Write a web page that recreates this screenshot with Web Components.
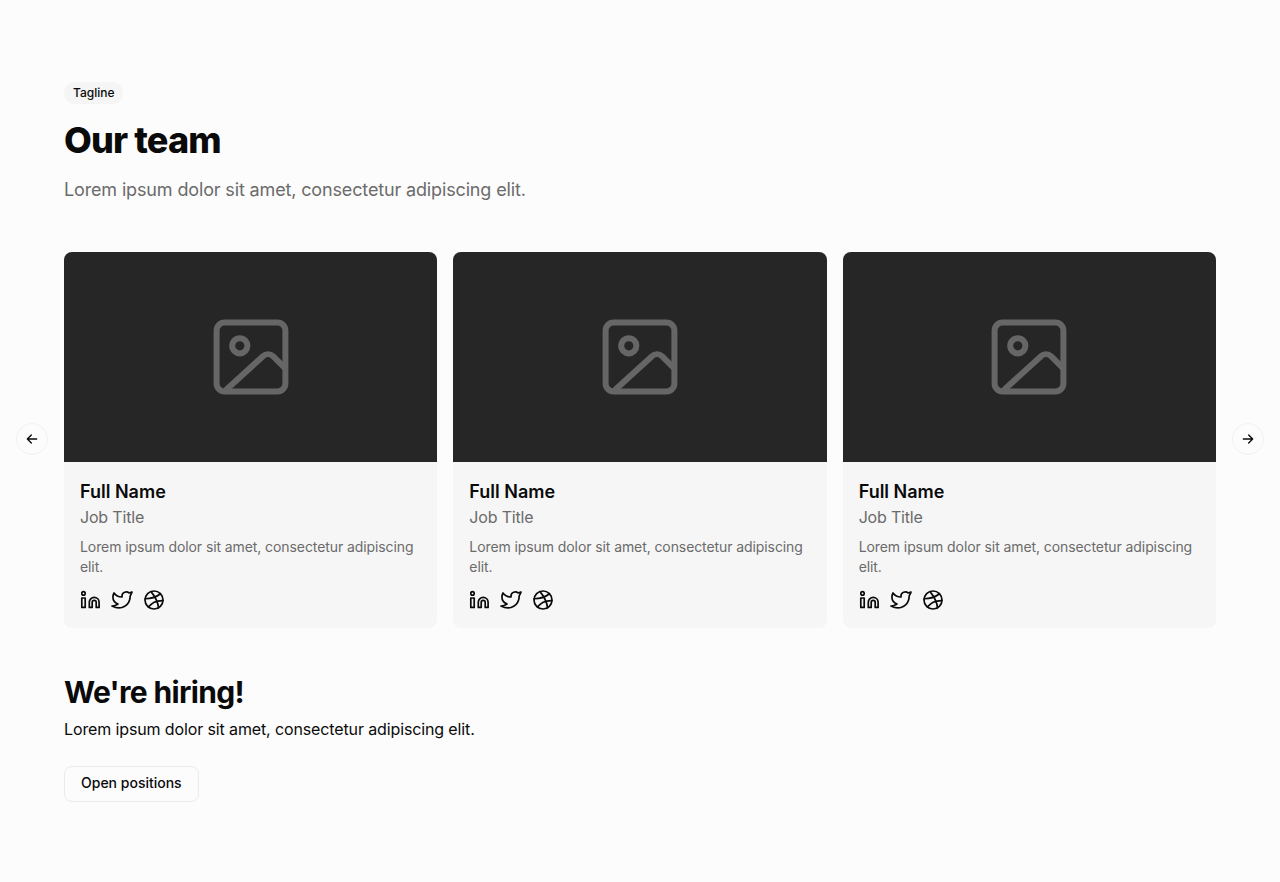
<!doctype html>
<html><head><meta charset="utf-8"><title>Our team</title>
<style>
html,body{margin:0;padding:0;background:#fcfcfc;}
body{font-family:Inter,"Noto Sans",sans-serif;color:#0a0a0a;}
</style></head>
<body>
<team-page></team-page>
<script>
const I={
 linkedin:'<circle cx="5.5" cy="5.4" r="1.7"/><path d="M3.8 10h3.4v9.4h-3.4z"/><path d="M11.3 19.4v-5.1a4.9 4.9 0 0 1 9.8 0v5.1h-2.9v-5.1a2 2 0 0 0-4 0v5.1z"/>',
 twitter:'<path d="M22 4.01c-1 .49-1.98.689-3 .99c-1.121-1.265-2.783-1.335-4.38-.737s-2.643 1.76-2.62 3.737v1c-3.245.083-6.135-1.395-8-4c0 0-4.182 7.433 4 11c-1.872 1.247-3.739 2.088-6 2c3.308 1.803 6.913 2.423 10.034 1.517c3.58-1.04 6.522-3.723 7.651-7.742a13.84 13.84 0 0 0 .497-3.753c0-.249 1.51-2.772 1.818-4.013z"/>',
 dribbble:'<circle cx="12" cy="12" r="9"/><path d="M9 3.6c5 6 7 10.5 7.5 16.2"/><path d="M6.4 19c3.5-3.5 6-6.5 14.5-6.4"/><path d="M3.1 10.75c5 0 9.814-.38 15.314-5"/>'
};
class SocialIcon extends HTMLElement{connectedCallback(){
 this.attachShadow({mode:'open'}).innerHTML=`<style>:host{display:block;width:24px;height:24px}svg{display:block}</style><svg viewBox="0 0 24 24" width="24" height="24" fill="none" stroke="#0a0a0a" stroke-width="1.7" stroke-linecap="round" stroke-linejoin="round">${I[this.getAttribute('name')]}</svg>`;
}}
customElements.define('social-icon',SocialIcon);

class TeamCard extends HTMLElement{connectedCallback(){
 this.attachShadow({mode:'open'}).innerHTML=`<style>
 :host{display:flex;flex-direction:column;background:#f6f6f6;border-radius:8px;overflow:hidden;min-width:0}
 .img{height:210px;background:#262626;display:flex;align-items:center;justify-content:center}
 .img svg{display:block}
 .body{padding:16px;display:flex;flex-direction:column;}
 .name{font-size:18px;line-height:28px;font-weight:600;height:28px}
 .job{font-size:16px;line-height:24px;color:#6b6b6b;margin-top:-1px;letter-spacing:-.18px}
 .desc{font-size:14px;line-height:20px;color:#6b6b6b;margin-top:8px;letter-spacing:-.09px}
 .soc{display:flex;gap:8px;margin-top:11px;margin-left:-2px}
 </style>
 <div class="img"><svg viewBox="0 0 24 24" width="96" height="96" fill="none" stroke="#666" stroke-width="1.5" stroke-linecap="round" stroke-linejoin="round"><rect x="3.4" y="3.4" width="17.2" height="17.2" rx="2"/><circle cx="9.2" cy="9.2" r="1.9"/><path d="M6 20 15 11.8a1.8 1.8 0 0 1 2.5 0L20.5 14.8"/></svg></div>
 <div class="body"><div class="name">Full Name</div><div class="job">Job Title</div>
 <div class="desc">Lorem ipsum dolor sit amet, consectetur adipiscing elit.</div>
 <div class="soc"><social-icon name="linkedin"></social-icon><social-icon name="twitter"></social-icon><social-icon name="dribbble"></social-icon></div></div>`;
}}
customElements.define('team-card',TeamCard);

class ArrowButton extends HTMLElement{connectedCallback(){
 const d=this.getAttribute('dir');
 const p=d==='left'?'M19 12H5M11 6l-6 6 6 6':'M5 12h14M13 6l6 6-6 6';
 this.attachShadow({mode:'open'}).innerHTML=`<style>
 :host{position:absolute;top:50%;${d==='left'?'left:-48px':'right:-48px'};margin-top:-17px;width:32px;height:32px;box-sizing:border-box;border:1px solid #f2f2f2;border-radius:50%;background:#fcfcfc;display:flex;align-items:center;justify-content:center}
 </style><svg viewBox="0 0 24 24" width="16" height="16" fill="none" stroke="#0a0a0a" stroke-width="2" stroke-linecap="round" stroke-linejoin="round"><path d="${p}"/></svg>`;
}}
customElements.define('arrow-button',ArrowButton);

class TeamPage extends HTMLElement{connectedCallback(){
 this.attachShadow({mode:'open'}).innerHTML=`<style>
 :host{display:block;padding:82px 64px 80px;min-height:882px;box-sizing:border-box}
 .tag{display:inline-block;font-size:12px;line-height:16px;font-weight:500;background:#f5f5f5;border-radius:999px;padding:3px 8px 3px 9px;vertical-align:top}
 .tagrow{height:22px}
 h1{margin:14px 0 0;font-size:36px;line-height:44px;font-weight:800;letter-spacing:-.85px}
 .sub{margin:14px 0 0;font-size:18px;line-height:28px;color:#6b6b6b;letter-spacing:-.145px}
 .car{position:relative;margin-top:48px;display:grid;grid-template-columns:repeat(3,1fr);gap:16px}
 h2{margin:44px 0 0;font-size:30px;line-height:40px;font-weight:700;letter-spacing:-.67px}
 .p2{margin:5px 0 0;font-size:16px;line-height:24px;letter-spacing:-.125px}
 .btn{display:inline-block;margin-top:25px;box-sizing:border-box;height:36px;border:1px solid #ebebeb;border-radius:8px;background:#fcfcfc;padding:0 16px;font-size:14px;line-height:32px;font-weight:500;}
 </style>
 <div class="tagrow"><span class="tag">Tagline</span></div>
 <h1>Our team</h1>
 <p class="sub">Lorem ipsum dolor sit amet, consectetur adipiscing elit.</p>
 <div class="car"><arrow-button dir="left"></arrow-button><team-card></team-card><team-card></team-card><team-card></team-card><arrow-button dir="right"></arrow-button></div>
 <h2>We're hiring!</h2>
 <p class="p2">Lorem ipsum dolor sit amet, consectetur adipiscing elit.</p>
 <span class="btn">Open positions</span>`;
}}
customElements.define('team-page',TeamPage);
</script>
</body></html>
